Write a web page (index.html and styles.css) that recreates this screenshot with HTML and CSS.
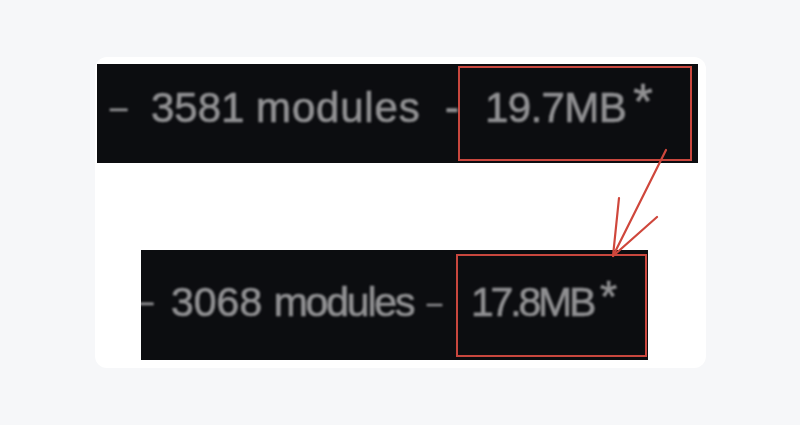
FILE: index.html
```html
<!DOCTYPE html>
<html>
<head>
<meta charset="utf-8">
<link rel="stylesheet" href="styles.css">
</head>
<body>
<div class="card">
  <div class="strip strip-a">
    <span class="cell dash-cell"><span class="dash">–</span></span>
    <span class="cell count-cell"><span class="num">3581</span> <span class="word">modules</span></span>
    <span class="cell dash2-cell"><span class="dash2">-</span></span>
    <span class="box"><span class="size">19.7MB</span><span class="star">*</span></span>
  </div>
  <div class="strip strip-b">
    <span class="cell dash-cell"><span class="dash">–</span></span>
    <span class="cell count-cell"><span class="num">3068</span> <span class="word">modules</span></span>
    <span class="cell dash2-cell"><span class="dash2">–</span></span>
    <span class="box"><span class="size">17.8MB</span><span class="star">*</span></span>
  </div>
</div>
<svg class="arrow" width="800" height="425" viewBox="0 0 800 425">
  <line x1="666" y1="150" x2="613" y2="256" />
  <polyline points="619,198 613,256 657,217" />
</svg>
</body>
</html>
```
FILE: styles.css
```css
html, body {
  margin: 0;
  padding: 0;
}
body {
  width: 800px;
  height: 425px;
  background: #f6f7f9;
  overflow: hidden;
  font-family: "Liberation Sans", Arial, sans-serif;
  padding-top: 57px;
  padding-left: 95px;
  box-sizing: border-box;
}
.card {
  width: 611px;
  height: 311px;
  background: #ffffff;
  border-radius: 12px;
  padding-top: 7px;
  box-sizing: border-box;
  display: flex;
  flex-direction: column;
}
.strip {
  background: #0c0d10;
  display: flex;
  overflow: hidden;
  color: #919193;
  white-space: nowrap;
  box-sizing: border-box;
}
.cell, .box {
  display: block;
  flex: none;
  box-sizing: border-box;
}
.cell span, .box span {
  filter: blur(0.8px);
  -webkit-text-stroke: 0.7px #919193;
}
.box {
  border: 2px solid #c9473e;
}
.star {
  line-height: 0;
}

/* strip A */
.strip-a {
  margin-left: 2px;
  width: 601px;
  height: 99px;
  padding: 2px 0;
  font-size: 42px;
}
.strip-a .cell {
  height: 95px;
  line-height: 83px;
  padding-bottom: 12px;
}
.strip-a .box {
  height: 95px;
  line-height: 79px;
  padding-bottom: 12px;
  width: 234px;
  padding-left: 25px;
}
.strip-a .dash-cell {
  width: 54px;
  padding-left: 13px;
}
.strip-a .dash {
  font-size: 31px;
  vertical-align: 4px;
}
.strip-a .count-cell {
  width: 294px;
  padding-left: 0;
}
.strip-a .word {
  letter-spacing: 0.8px;
}
.strip-a .dash2-cell {
  width: 13px;
}
.strip-a .size {
  letter-spacing: -0.6px;
}
.strip-a .star {
  font-size: 50px;
  margin-left: 7px;
  vertical-align: 3px;
}

/* strip B */
.strip-b {
  margin-top: 87px;
  margin-left: 46px;
  width: 507px;
  height: 110px;
  padding: 4px 0 3px;
  font-size: 41px;
}
.strip-b .cell {
  height: 103px;
  line-height: 96px;
  padding-bottom: 7px;
}
.strip-b .box {
  height: 103px;
  line-height: 92px;
  padding-bottom: 7px;
  width: 191px;
  padding-left: 13px;
}
.strip-b .dash-cell {
  width: 30px;
}
.strip-b .dash {
  display: inline-block;
  margin-left: -5px;
  font-size: 31px;
  vertical-align: 4px;
}
.strip-b .count-cell {
  width: 254px;
}
.strip-b .word {
  letter-spacing: -2.2px;
}
.strip-b .dash2-cell {
  width: 31px;
  padding-left: 2px;
}
.strip-b .dash2 {
  font-size: 27px;
  vertical-align: 4px;
}
.strip-b .size {
  letter-spacing: -3.2px;
}
.strip-b .star {
  font-size: 44px;
  margin-left: 7px;
  vertical-align: 4px;
}

.arrow {
  position: absolute;
  left: 0;
  top: 0;
  pointer-events: none;
}
.arrow line, .arrow polyline {
  fill: none;
  stroke: #cf473c;
  stroke-width: 2.2;
  stroke-linecap: round;
  stroke-linejoin: round;
}
```
